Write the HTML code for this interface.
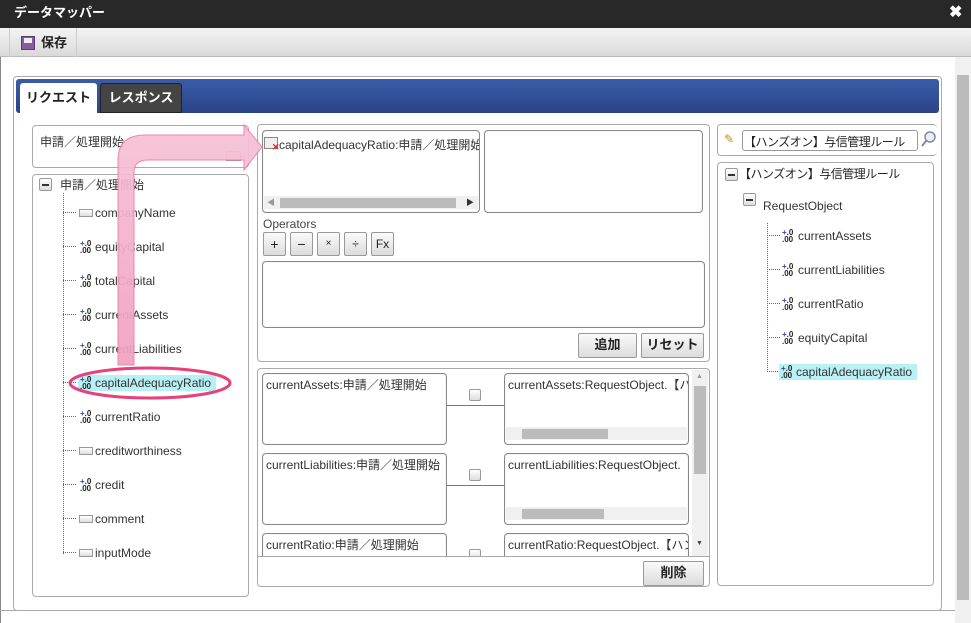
<!DOCTYPE html>
<html><head><meta charset="utf-8"><style>
*{box-sizing:border-box;margin:0;padding:0}
body{width:971px;height:623px;overflow:hidden;background:#fff;font-family:"Liberation Sans","Noto Sans CJK JP",sans-serif;font-size:12px;color:#333;position:relative}
.a{position:absolute}
.box{position:absolute;border:1px solid #aaa;border-radius:4px;background:#fff}
.ibox{position:absolute;border:1px solid #888;border-radius:4px;background:#fff;box-shadow:inset 0 0 1px #ccc}
.btn{position:absolute;border:1px solid #999;border-radius:2px;background:linear-gradient(#fafafa,#dcdcdc);text-align:center;color:#222}
.bb{font-weight:bold;font-size:13px;line-height:22px}
.ti{position:absolute;font-size:12px;color:#333;line-height:14px}
.num{position:absolute;font-size:8px;line-height:7px;font-weight:bold;color:#222;width:14px}
.num b{color:#2a4aa0}
.txt{position:absolute;width:14px;height:8px;border:1px solid #999;background:linear-gradient(#fff,#ddd)}
.dl{position:absolute;border-top:1px dotted #666;width:13px}
.hs{position:absolute;height:13px;background:#f0f0f0}
.hs i{position:absolute;top:2px;height:10px;background:#bbb}
</style></head><body>
<div class="a" style="left:0;top:0;width:971px;height:28px;background:#282828"></div>
<div class="a" style="left:14px;top:5px;color:#fff;font-weight:bold;font-size:13px;line-height:16px">データマッパー</div>
<div class="a" style="left:949px;top:4px;color:#fff;font-weight:bold;font-size:16px;line-height:18px">✖</div>
<div class="a" style="left:0;top:28px;width:971px;height:29px;background:linear-gradient(#f4f4f4,#dadada);border-bottom:1px solid #bbb"></div>
<div class="a" style="left:9px;top:28px;width:68px;height:29px;border-left:1px solid #ccc;border-right:1px solid #ccc"></div>
<div class="a" style="left:21px;top:36px;width:14px;height:14px;background:#8a5aa0;border:1px solid #5a3a70"><div style="margin:1px 2px;height:5px;background:#eee"></div></div>
<div class="a" style="left:41px;top:34px;font-weight:bold;font-size:13px;line-height:18px;color:#222">保存</div>
<div class="a" style="left:955px;top:57px;width:16px;height:566px;background:#f0f0f0"></div>
<div class="a" style="left:957px;top:75px;width:12px;height:525px;background:#bbb"></div>
<div class="a" style="left:0;top:57px;width:1px;height:566px;background:#888"></div>
<div class="box" style="left:13px;top:76px;width:929px;height:535px"></div>
<div class="a" style="left:16px;top:79px;width:923px;height:34px;background:linear-gradient(#3a5ca8,#2a4488);border-radius:3px"></div>
<div class="a" style="left:20px;top:83px;width:77px;height:31px;background:#fff;border-radius:3px 3px 0 0;font-weight:bold;font-size:13px;text-align:center;line-height:30px;color:#222">リクエスト</div>
<div class="a" style="left:100px;top:83px;width:82px;height:30px;background:#444;border:1px solid #222;border-radius:3px 3px 0 0;font-weight:bold;font-size:13px;text-align:center;line-height:28px;color:#fff">レスポンス</div>
<div class="box" style="left:32px;top:125px;width:217px;height:43px"></div>
<div class="a" style="left:40px;top:133px;font-size:12px">申請／処理開始</div>
<div class="a" style="left:226px;top:151px;width:15px;height:10px;border:1px solid #999;background:#eee"></div>
<div class="box" style="left:32px;top:174px;width:217px;height:423px"></div>
<div class="a" style="left:39px;top:178px;width:13px;height:13px;border:1px solid #999;border-radius:2px;background:linear-gradient(#fff,#ddd)"><div style="margin:5px 2px;height:2px;background:#333"></div></div>
<div class="a" style="left:60px;top:176px">申請／処理開始</div>
<div class="a" style="left:63px;top:193px;height:361px;border-left:1px dotted #666"></div>

<div class="dl" style="left:63px;top:212px"></div><div class="txt" style="left:79px;top:209px"></div><div class="ti" style="left:95px;top:206px">companyName</div>
<div class="dl" style="left:63px;top:246px"></div><div class="num" style="left:80px;top:240px"><b>+</b>.0<br>.00</div><div class="ti" style="left:95px;top:240px">equityCapital</div>
<div class="dl" style="left:63px;top:280px"></div><div class="num" style="left:80px;top:274px"><b>+</b>.0<br>.00</div><div class="ti" style="left:95px;top:274px">totalCapital</div>
<div class="dl" style="left:63px;top:314px"></div><div class="num" style="left:80px;top:308px"><b>+</b>.0<br>.00</div><div class="ti" style="left:95px;top:308px">currentAssets</div>
<div class="dl" style="left:63px;top:348px"></div><div class="num" style="left:80px;top:342px"><b>+</b>.0<br>.00</div><div class="ti" style="left:95px;top:342px">currentLiabilities</div>
<div class="dl" style="left:63px;top:382px"></div><div class="a" style="left:78px;top:375px;width:138px;height:16px;background:#b8f0f4"></div><div class="num" style="left:80px;top:376px"><b>+</b>.0<br>.00</div><div class="ti" style="left:95px;top:376px">capitalAdequacyRatio</div>
<div class="dl" style="left:63px;top:416px"></div><div class="num" style="left:80px;top:410px"><b>+</b>.0<br>.00</div><div class="ti" style="left:95px;top:410px">currentRatio</div>
<div class="dl" style="left:63px;top:450px"></div><div class="txt" style="left:79px;top:447px"></div><div class="ti" style="left:95px;top:444px">creditworthiness</div>
<div class="dl" style="left:63px;top:484px"></div><div class="num" style="left:80px;top:478px"><b>+</b>.0<br>.00</div><div class="ti" style="left:95px;top:478px">credit</div>
<div class="dl" style="left:63px;top:518px"></div><div class="txt" style="left:79px;top:515px"></div><div class="ti" style="left:95px;top:512px">comment</div>
<div class="dl" style="left:63px;top:552px"></div><div class="txt" style="left:79px;top:549px"></div><div class="ti" style="left:95px;top:546px">inputMode</div>

<div class="box" style="left:257px;top:124px;width:453px;height:238px"></div>
<div class="ibox" style="left:262px;top:130px;width:218px;height:83px"></div>
<div class="a" style="left:264px;top:137px;width:14px;height:12px;border:1px solid #888;background:#eee"></div>
<div class="a" style="left:272px;top:142px;color:#e02020;font-size:9px;font-weight:bold">✕</div>
<div class="a" style="left:279px;top:136px;width:200px;overflow:hidden;white-space:nowrap">capitalAdequacyRatio:申請／処理開始</div>
<div class="hs" style="left:264px;top:196px;width:214px"><i style="left:16px;width:176px"></i></div>
<div class="a" style="left:267px;top:197px;font-size:8px;color:#999">◀</div><div class="a" style="left:466px;top:197px;font-size:8px;color:#333">▶</div>
<div class="ibox" style="left:484px;top:130px;width:219px;height:83px"></div>
<div class="a" style="left:263px;top:217px;color:#444">Operators</div>
<div class="btn" style="left:263px;top:232px;width:23px;height:24px;line-height:22px;font-size:14px">+</div>
<div class="btn" style="left:290px;top:232px;width:23px;height:24px;line-height:22px;font-size:14px">−</div>
<div class="btn" style="left:317px;top:232px;width:23px;height:24px;line-height:22px;font-size:10px">×</div>
<div class="btn" style="left:344px;top:232px;width:23px;height:24px;line-height:22px;font-size:12px">÷</div>
<div class="btn" style="left:371px;top:232px;width:23px;height:24px;line-height:22px;font-size:12px">Fx</div>
<div class="ibox" style="left:262px;top:261px;width:443px;height:67px"></div>
<div class="btn bb" style="left:578px;top:333px;width:59px;height:25px">追加</div>
<div class="btn bb" style="left:641px;top:333px;width:63px;height:25px">リセット</div>

<div class="box" style="left:257px;top:368px;width:453px;height:219px"></div>
<div class="a" style="left:258px;top:556px;width:451px;border-top:1px solid #aaa"></div>
<div class="a" style="left:692px;top:370px;width:16px;height:186px;background:#f0f0f0"></div>
<div class="a" style="left:694px;top:386px;width:12px;height:88px;background:#bbb"></div>
<div class="a" style="left:696px;top:373px;font-size:7px;color:#999">▲</div><div class="a" style="left:696px;top:540px;font-size:7px;color:#444">▼</div>
<div class="a" style="left:258px;top:370px;width:434px;height:186px;overflow:hidden">
 <div class="ibox" style="left:4px;top:3px;width:185px;height:72px"></div>
 <div class="a" style="left:8px;top:6px">currentAssets:申請／処理開始</div>
 <div class="a" style="left:189px;top:35px;width:57px;border-top:1px solid #777"></div>
 <div class="a" style="left:211px;top:19px;width:12px;height:12px;border:1px solid #999;border-radius:2px;background:linear-gradient(#fff,#ddd)"></div>
 <div class="ibox" style="left:246px;top:3px;width:185px;height:72px"></div>
 <div class="a" style="left:250px;top:6px;width:180px;overflow:hidden;white-space:nowrap">currentAssets:RequestObject.【ハンズオン】</div>
 <div class="hs" style="left:248px;top:57px;width:181px"><i style="left:16px;width:86px"></i></div>
 <div class="ibox" style="left:4px;top:83px;width:185px;height:72px"></div>
 <div class="a" style="left:8px;top:86px">currentLiabilities:申請／処理開始</div>
 <div class="a" style="left:189px;top:115px;width:57px;border-top:1px solid #777"></div>
 <div class="a" style="left:211px;top:99px;width:12px;height:12px;border:1px solid #999;border-radius:2px;background:linear-gradient(#fff,#ddd)"></div>
 <div class="ibox" style="left:246px;top:83px;width:185px;height:72px"></div>
 <div class="a" style="left:250px;top:86px;width:180px;overflow:hidden;white-space:nowrap">currentLiabilities:RequestObject.【</div>
 <div class="hs" style="left:248px;top:137px;width:181px"><i style="left:16px;width:82px"></i></div>
 <div class="ibox" style="left:4px;top:163px;width:185px;height:72px"></div>
 <div class="a" style="left:8px;top:166px">currentRatio:申請／処理開始</div>
 <div class="a" style="left:211px;top:179px;width:12px;height:12px;border:1px solid #999;border-radius:2px;background:linear-gradient(#fff,#ddd)"></div>
 <div class="ibox" style="left:246px;top:163px;width:185px;height:72px"></div>
 <div class="a" style="left:250px;top:166px;width:180px;overflow:hidden;white-space:nowrap">currentRatio:RequestObject.【ハンズ</div>
</div>
<div class="btn bb" style="left:643px;top:561px;width:61px;height:25px">削除</div>

<div class="box" style="left:717px;top:124px;width:220px;height:32px;border-right:none"></div>
<div class="a" style="left:724px;top:132px;font-size:12px;color:#c80">✎</div>
<div class="a" style="left:742px;top:130px;width:176px;height:21px;border:1px solid #999;border-radius:3px;padding:2px 1px;white-space:nowrap;overflow:hidden;color:#222;letter-spacing:-0.5px">【ハンズオン】与信管理ルール</div>
<svg class="a" style="left:920px;top:130px" width="18" height="18"><circle cx="10" cy="7" r="5" fill="#e8eef8" stroke="#889" stroke-width="1.5"/><line x1="6" y1="11" x2="2" y2="16" stroke="#889" stroke-width="2"/></svg>
<div class="box" style="left:717px;top:162px;width:217px;height:424px"></div>
<div class="a" style="left:725px;top:168px;width:13px;height:13px;border:1px solid #999;border-radius:2px;background:linear-gradient(#fff,#ddd)"><div style="margin:5px 2px;height:2px;background:#333"></div></div>
<div class="a" style="left:739px;top:165px;color:#222;letter-spacing:-0.5px">【ハンズオン】与信管理ルール</div>
<div class="a" style="left:743px;top:193px;width:13px;height:13px;border:1px solid #999;border-radius:2px;background:linear-gradient(#fff,#ddd)"><div style="margin:5px 2px;height:2px;background:#333"></div></div>
<div class="a" style="left:763px;top:199px;color:#333">RequestObject</div>
<div class="a" style="left:767px;top:223px;height:149px;border-left:1px dotted #666"></div>
<div class="dl" style="left:767px;top:235px"></div><div class="num" style="left:782px;top:229px"><b>+</b>.0<br>.00</div><div class="ti" style="left:798px;top:229px">currentAssets</div>
<div class="dl" style="left:767px;top:269px"></div><div class="num" style="left:782px;top:263px"><b>+</b>.0<br>.00</div><div class="ti" style="left:798px;top:263px">currentLiabilities</div>
<div class="dl" style="left:767px;top:303px"></div><div class="num" style="left:782px;top:297px"><b>+</b>.0<br>.00</div><div class="ti" style="left:798px;top:297px">currentRatio</div>
<div class="dl" style="left:767px;top:337px"></div><div class="num" style="left:782px;top:331px"><b>+</b>.0<br>.00</div><div class="ti" style="left:798px;top:331px">equityCapital</div>
<div class="dl" style="left:767px;top:371px"></div><div class="a" style="left:779px;top:364px;width:138px;height:16px;background:#b8f0f4"></div><div class="num" style="left:781px;top:365px"><b>+</b>.0<br>.00</div><div class="ti" style="left:796px;top:365px">capitalAdequacyRatio</div>

<svg class="a" style="left:0;top:0" width="971" height="623">
<defs><linearGradient id="g" x1="0" y1="0" x2="0" y2="1"><stop offset="0" stop-color="#f7c2d8"/><stop offset="1" stop-color="#f0a0c0"/></linearGradient></defs>
<path d="M118 365 L118 160 Q118 135 145 135 L244 135 L244 125 L262 147 L244 170 L244 160 L148 160 Q134 160 134 172 L134 365 Z" fill="url(#g)" stroke="#f07aa8" stroke-width="1" opacity="0.92"/>
<ellipse cx="150" cy="383" rx="80" ry="15" fill="none" stroke="#e8407a" stroke-width="3"/>
</svg>
<div class="a" style="left:0;top:610px;width:955px;border-top:1px solid #aaa"></div>
</body></html>
